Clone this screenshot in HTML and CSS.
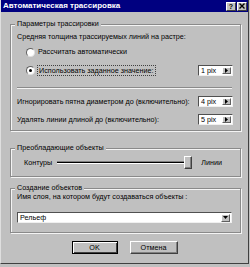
FILE: index.html
```html
<!DOCTYPE html>
<html>
<head>
<meta charset="utf-8">
<link rel="stylesheet" href="styles.css">
</head>
<body>
<div class="window">
  <div class="titlebar">
    <span class="title">Автоматическая трассировка</span>
    <div class="tbtns">
      <span class="tbtn help">?</span>
      <span class="tbtn close"><svg width="6" height="6" viewBox="0 0 6 6"><path d="M0.5 0.5L5.5 5.5M5.5 0.5L0.5 5.5" stroke="#000" stroke-width="1.4"/></svg></span>
    </div>
  </div>
  <div class="content">
    <div class="group g1">
      <div class="legend">Параметры трассировки</div>
      <div class="line l-avg">Средняя толщина трассируемых линий на растре:</div>
      <div class="radio-row rr1"><span class="radio"></span><span class="rtext">Рассчитать автоматически</span></div>
      <div class="radio-row rr2"><span class="radio checked"></span><span class="rtext focus">Использовать заданное значение:</span>
        <div class="spin"><span class="val">1 pix</span><span class="sbtn"><svg width="3" height="5" viewBox="0 0 3 5"><path d="M0 0L3 2.5L0 5Z" fill="#000"/></svg></span></div>
      </div>
      <div class="sep"></div>
      <div class="row rw1"><span>Игнорировать пятна диаметром до (включительно):</span>
        <div class="spin"><span class="val">4 pix</span><span class="sbtn"><svg width="3" height="5" viewBox="0 0 3 5"><path d="M0 0L3 2.5L0 5Z" fill="#000"/></svg></span></div>
      </div>
      <div class="row rw2"><span>Удалять линии длиной до (включительно):</span>
        <div class="spin"><span class="val">5 pix</span><span class="sbtn"><svg width="3" height="5" viewBox="0 0 3 5"><path d="M0 0L3 2.5L0 5Z" fill="#000"/></svg></span></div>
      </div>
    </div>
    <div class="group g2">
      <div class="legend">Преобладающие объекты</div>
      <div class="slider-row">
        <span class="slabel">Контуры</span>
        <div class="slider"><div class="track"></div><div class="thumb"></div></div>
        <span class="slabel right">Линии</span>
      </div>
    </div>
    <div class="group g3">
      <div class="legend">Создание объектов</div>
      <div class="line l-layer">Имя слоя, на котором будут создаваться объекты :</div>
      <div class="combo"><span class="val">Рельеф</span><span class="cbtn"><svg width="5" height="3" viewBox="0 0 5 3"><path d="M0 0L5 0L2.5 3Z" fill="#000"/></svg></span></div>
    </div>
    <div class="buttons">
      <div class="btn default"><span>OK</span></div>
      <div class="btn cancel"><span>Отмена</span></div>
    </div>
  </div>
</div>
</body>
</html>
```
FILE: styles.css
```css
html, body {
  margin: 0;
  padding: 0;
  background: #c0c0c0;
}
body {
  font-family: "Liberation Sans", Arial, sans-serif;
  font-size: 7.2px;
  line-height: 10px;
  color: #000;
}
.window {
  width: 249px;
  height: 264px;
  box-sizing: border-box;
  background: #c0c0c0;
  border-left: 1px solid #dfdfdf;
  border-right: 1px solid #404040;
  border-bottom: 1px solid #404040;
  display: flex;
  flex-direction: column;
}
.titlebar {
  height: 12px;
  background: #000080;
  color: #fff;
  display: flex;
  align-items: center;
  justify-content: space-between;
  padding: 0 1px 0 2px;
}
.title {
  font-weight: bold;
  font-size: 8px;
}
.tbtns {
  display: flex;
  gap: 1px;
}
.tbtn {
  width: 10px;
  height: 9px;
  box-sizing: border-box;
  background: #c0c0c0;
  border: 1px solid;
  border-color: #fff #404040 #404040 #fff;
  color: #000;
  font-weight: bold;
  font-size: 7px;
  line-height: 7px;
  display: flex;
  align-items: center;
  justify-content: center;
}
.content {
  display: flex;
  flex-direction: column;
  padding-left: 9px;
}
.group {
  width: 231px;
  box-sizing: border-box;
  border: 1px solid #8a8a8a;
  box-shadow: 1px 1px 0 #f4f4f4, inset 1px 1px 0 #f4f4f4;
  display: flex;
  flex-direction: column;
}
.legend {
  align-self: flex-start;
  margin: -6px 0 0 4px;
  padding: 0 2px;
  background: #c0c0c0;
  line-height: 10px;
  white-space: nowrap;
}
.g1 {
  margin-top: 12px;
  height: 107px;
}
.line {
  white-space: nowrap;
  padding-left: 6px;
}
.l-avg { margin-top: 3px; }
.radio-row {
  display: flex;
  align-items: center;
  height: 12px;
  padding-left: 15px;
  padding-right: 7px;
}
.rr1 { margin-top: 4px; }
.rr2 { margin-top: 6px; }
.radio {
  width: 9px;
  height: 9px;
  box-sizing: border-box;
  border-radius: 50%;
  background: #fff;
  border: 1px solid;
  border-color: #606060 #e0e0e0 #e0e0e0 #606060;
  display: flex;
  align-items: center;
  justify-content: center;
}
.radio.checked::after {
  content: "";
  width: 3px;
  height: 3px;
  border-radius: 50%;
  background: #000;
}
.rtext {
  margin-left: 3px;
  white-space: nowrap;
}
.focus {
  outline: 1px dotted #404040;
  padding: 0 1px;
  line-height: 9px;
}
.spin {
  margin-left: auto;
  width: 35px;
  height: 11px;
  box-sizing: border-box;
  background: #fff;
  border: 1px solid;
  border-color: #505050 #f0f0f0 #f0f0f0 #505050;
  display: flex;
  align-items: center;
  justify-content: space-between;
  padding-left: 2px;
  padding-right: 1px;
}
.val {
  line-height: 9px;
  white-space: nowrap;
}
.sbtn, .cbtn {
  width: 9px;
  height: 7px;
  box-sizing: border-box;
  background: #c0c0c0;
  border: 1px solid;
  border-color: #fff #606060 #606060 #fff;
  display: flex;
  align-items: center;
  justify-content: center;
}
.sep {
  margin: 11px 8px 0 6px;
  height: 0;
  border-top: 1px solid #8a8a8a;
  border-bottom: 1px solid #f4f4f4;
}
.row {
  display: flex;
  align-items: center;
  height: 11px;
  padding-left: 6px;
  padding-right: 7px;
  white-space: nowrap;
}
.rw1 { margin-top: 7px; }
.rw2 { margin-top: 7px; }
.g2 {
  margin-top: 17px;
  height: 29px;
}
.slider-row {
  display: flex;
  align-items: center;
  height: 13px;
  margin-top: 3px;
  padding-left: 13px;
}
.slider {
  display: flex;
  align-items: center;
  width: 135px;
  margin-left: 5px;
  margin-right: 9px;
}
.track {
  flex: 1;
  height: 1px;
  background: #000;
  border-top: 1px solid #808080;
  border-bottom: 1px solid #fff;
  margin-right: -2px;
}
.thumb {
  width: 8px;
  height: 13px;
  box-sizing: border-box;
  background: #c0c0c0;
  border: 1px solid;
  border-color: #fff #404040 #404040 #fff;
  box-shadow: inset -1px -1px 0 #808080;
}
.g3 {
  margin-top: 11px;
  height: 45px;
}
.l-layer { margin-top: -1px; }
.combo {
  margin: 10px 8px 0 6px;
  height: 11px;
  box-sizing: border-box;
  background: #fff;
  border: 1px solid;
  border-color: #505050 #f0f0f0 #f0f0f0 #505050;
  display: flex;
  align-items: center;
  justify-content: space-between;
  padding-left: 2px;
  padding-right: 1px;
}
.cbtn {
  height: 8px;
}
.buttons {
  display: flex;
  justify-content: center;
  gap: 12px;
  margin-top: 8px;
  padding-right: 9px;
}
.btn {
  height: 13px;
  box-sizing: border-box;
  background: #c0c0c0;
  border: 1px solid;
  border-color: #fff #404040 #404040 #fff;
  box-shadow: inset -1px -1px 0 #808080;
  display: flex;
  align-items: center;
  justify-content: center;
}
.btn.default {
  width: 46px;
  border: 1px solid #000;
  box-shadow: inset 1px 1px 0 #fff, inset -1px -1px 0 #404040;
}
.btn.cancel {
  width: 48px;
}
```
